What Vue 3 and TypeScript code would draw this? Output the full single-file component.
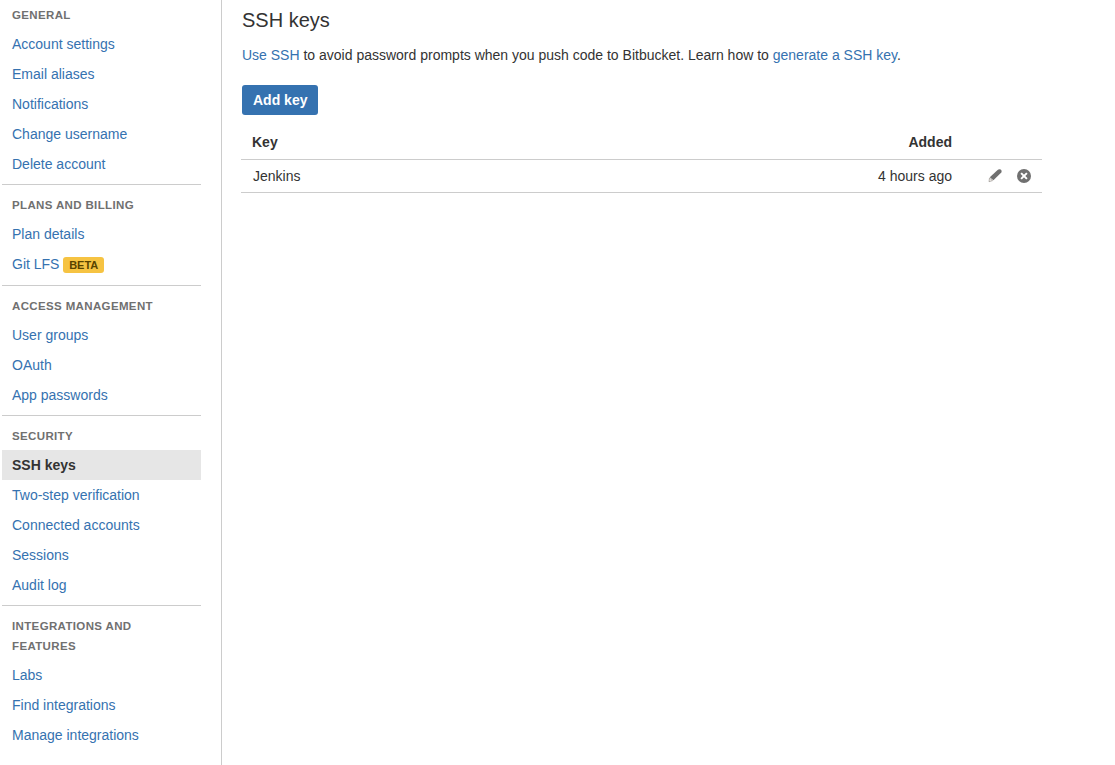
<script setup lang="ts">
interface Item { label: string; badge?: string; active?: boolean }
interface Group { title: string; items: Item[] }

const groups: Group[] = [
  { title: 'General', items: [{ label: 'Account settings' }, { label: 'Email aliases' }, { label: 'Notifications' }, { label: 'Change username' }, { label: 'Delete account' }] },
  { title: 'Plans and billing', items: [{ label: 'Plan details' }, { label: 'Git LFS', badge: 'Beta' }] },
  { title: 'Access management', items: [{ label: 'User groups' }, { label: 'OAuth' }, { label: 'App passwords' }] },
  { title: 'Security', items: [{ label: 'SSH keys', active: true }, { label: 'Two-step verification' }, { label: 'Connected accounts' }, { label: 'Sessions' }, { label: 'Audit log' }] },
  { title: 'Integrations and features', items: [{ label: 'Labs' }, { label: 'Find integrations' }, { label: 'Manage integrations' }] },
]
const keys = [{ name: 'Jenkins', added: '4 hours ago' }]
</script>

<template>
  <div class="page">
    <nav class="sidebar">
      <section v-for="g in groups" :key="g.title" class="group">
        <h2 class="group-title">{{ g.title }}</h2>
        <ul class="list">
          <li v-for="i in g.items" :key="i.label">
            <a class="item" :class="{ active: i.active, badged: i.badge }">{{ i.label }}<span v-if="i.badge" class="badge">{{ i.badge }}</span></a>
          </li>
        </ul>
      </section>
    </nav>
    <main class="content">
      <h1 class="title">SSH keys</h1>
      <p class="intro"><a>Use SSH</a> to avoid password prompts when you push code to Bitbucket. Learn how to <a>generate a SSH key</a>.</p>
      <button class="add" type="button">Add key</button>
      <div class="table">
        <div class="row head"><span class="name">Key</span><span class="added">Added</span></div>
        <div v-for="k in keys" :key="k.name" class="row">
          <span class="name">{{ k.name }}</span>
          <span class="added">{{ k.added }}</span>
          <span class="actions">
            <svg width="14" height="14" viewBox="0 0 14 14" fill="#707070">
              <path d="M1.8 8.3 9.6 .9Q11 -.3 12.7 .5Q14.2 1.7 13.3 3.5L5.4 11.3Z" />
              <path d="M1.5 9 4.5 11.6 1 12.7Z" fill="#f5f2ee" stroke="#8a8580" stroke-width=".6" />
            </svg>
            <svg width="14" height="14" viewBox="0 0 14 14">
              <circle cx="7" cy="7" r="7" fill="#707070" />
              <path d="M4.1 4.1 9.9 9.9M9.9 4.1 4.1 9.9" stroke="#fff" stroke-width="2" />
            </svg>
          </span>
        </div>
      </div>
    </main>
  </div>
</template>

<style>
body { margin: 0; background: #fff; overflow: hidden; }
</style>

<style scoped>
.page { display: flex; height: 765px; overflow: hidden; font: 14px/20px "Liberation Sans", Arial, sans-serif; color: #333; }
a { color: #3572b0; text-decoration: none; }
.sidebar { box-sizing: border-box; width: 222px; flex: none; padding: 0 20px 0 2px; border-right: 1px solid #ccc; }
.group { padding-top: 10px; border-top: 1px solid #ccc; }
.group:first-child { padding-top: 5px; border-top: 0; }
.group:not(:last-child) { padding-bottom: 5px; }
.group-title { margin: 0; padding: 0 10px 4px; font-size: 11.5px; line-height: 20px; font-weight: 700; letter-spacing: .36px; text-transform: uppercase; color: #707070; }
.list { list-style: none; margin: 0; padding: 0; }
.item { display: block; height: 20px; padding: 5px 10px; }
.item.badged { height: 21px; }
.item.active { background: #e6e6e6; color: #333; font-weight: 700; }
.badge { display: inline-block; height: 16px; margin-left: 4px; padding: 0 5.7px; border-radius: 3px; background: #f6c342; color: #594300; font-size: 11px; line-height: 16px; font-weight: 700; text-transform: uppercase; }
.content { width: 801px; padding: 7px 0 0 19px; }
.title { margin: 0 0 0 1px; font-size: 20px; line-height: 26px; font-weight: 400; }
.intro { margin: 12px 0 0 1px; }
.add { display: block; height: 30px; margin: 20px 0 0 1px; padding: 0 11px; border: 0; border-radius: 3px; background: #3572b0; color: #fff; font: 700 14px/30px "Liberation Sans", Arial, sans-serif; }
.table { margin-top: 10px; }
.row { display: flex; height: 32px; line-height: 32px; border-bottom: 1px solid #ccc; }
.head { height: 34px; line-height: 34px; font-weight: 700; }
.name { flex: 1; padding-left: 12px; }
.head .name { padding-left: 11px; }
.added { width: 200px; margin-right: 90px; text-align: right; }
.row:not(.head) .added { margin-right: 36px; }
.actions { display: flex; align-items: center; gap: 15px; width: 54px; }
</style>
